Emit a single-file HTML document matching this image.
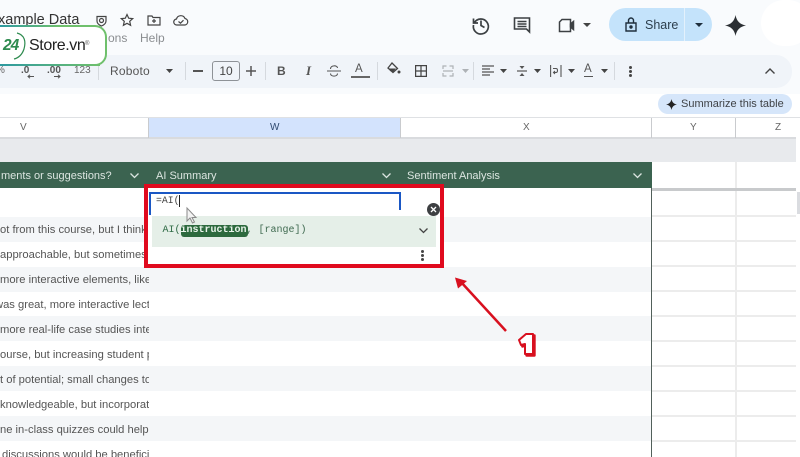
<!DOCTYPE html>
<html><head><meta charset="utf-8">
<style>
html,body{margin:0;padding:0}
body{width:800px;height:457px;overflow:hidden;position:relative;background:#fff;font-family:"Liberation Sans",sans-serif;color:#444746}
#w{position:absolute;left:0;top:0;width:800px;height:457px;overflow:hidden;background:#fff;filter:blur(.35px)}
.a{position:absolute}
.t{position:absolute;white-space:nowrap;line-height:1}
.row{position:absolute;left:0;width:651px;height:25px}
.s{background:#f4f6f8}
.cell{position:absolute;left:0;width:149px;height:25px;overflow:hidden;font-size:11.2px;color:#555}
.cell span{position:absolute;left:0;top:7px;white-space:nowrap}
.hl{position:absolute;height:2px;left:652px;width:144px;background:#ececec}
svg{position:absolute;overflow:visible}
</style></head><body><div id="w">
<div class="a" style="left:0;top:0;width:800px;height:118px;background:#f9fbfd"></div>
<div class="a" style="left:0;top:94px;width:800px;height:24px;background:#fff"></div>
<div class="a" style="left:-20px;top:55px;width:812px;height:33px;background:#f0f4f9;border-radius:16px"></div>

<div class="t" style="left:-2px;top:13px;font-size:14.5px;color:#333">xample Data</div>
<svg style="left:95px;top:14px" width="13" height="13" viewBox="0 0 13 13" fill="none" stroke="#444" stroke-width="1.2"><path d="M2 2.500h9v4.500c0 2.500-2 4-4.500 5C4 11 2 9.500 2 7z"/><circle cx="6.500" cy="6.500" r="2"/></svg>
<svg style="left:120px;top:13px" width="14" height="14" viewBox="0 0 14 14" fill="none" stroke="#444" stroke-width="1.200"><path d="M7 1.500l1.700 3.700 4 .4-3 2.700.9 4L7 10.300l-3.600 2 .9-4-3-2.700 4-.4z"/></svg>
<svg style="left:147px;top:14px" width="14" height="12" viewBox="0 0 14 12" fill="none" stroke="#444" stroke-width="1.200"><path d="M1 2h4l1 1.500h7V11H1zM7 5v4M5 7h4"/></svg>
<svg style="left:173px;top:15px" width="16" height="11" viewBox="0 0 16 11" fill="none" stroke="#444" stroke-width="1.200"><path d="M4 10a3 3 0 0 1-.5-6A4.500 4.500 0 0 1 12 3.500 3.300 3.300 0 0 1 12 10zM5.500 6.500l2 1.700 3-3"/></svg>
<div class="t" style="left:108px;top:32px;font-size:12px;color:#8a8d90">ons</div>
<div class="t" style="left:140px;top:32px;font-size:12px;color:#8a8d90">Help</div>

<!-- Right header -->
<svg style="left:471px;top:15px" width="20" height="20" viewBox="0 0 20 20" fill="none" stroke="#3c4043" stroke-width="1.700"><path d="M3.500 7.500A7.500 7.500 0 1 1 2.500 10M2.500 3.500v4.500h4.500M10 5.500V10.500l3.500 2"/></svg>
<svg style="left:513px;top:16px" width="18" height="18" viewBox="0 0 18 18" fill="none" stroke="#3c4043" stroke-width="1.600"><path d="M1.500 2h15v14l-3-3h-12zM4.500 5.500h9M4.500 8h9M4.500 10.500h9"/></svg>
<svg style="left:558px;top:18px" width="18" height="15" viewBox="0 0 18 15" fill="none" stroke="#3c4043" stroke-width="1.500"><path d="M4 1.500h8.500v12H1.500V4z"/><path d="M12.500 6l3-2.500v8l-3-2.500z" fill="#3c4043"/></svg>
<svg style="left:583px;top:23px" width="8" height="4" viewBox="0 0 8 4"><path d="M0 0h8L4 4z" fill="#444"/></svg>
<div class="a" style="left:609px;top:8px;width:103px;height:33px;background:#c4e3fb;border-radius:17px"></div>
<div class="a" style="left:684px;top:8px;width:1px;height:33px;background:#e3f1fc"></div>
<svg style="left:625px;top:17px" width="12" height="15" viewBox="0 0 12 15" fill="none" stroke="#1f2f3d" stroke-width="1.400"><path d="M1 6h10v8H1zM3.500 6V3.500a2.500 2.500 0 0 1 5 0V6"/><circle cx="6" cy="10" r="1" fill="#1f2f3d"/></svg>
<div class="t" style="left:645px;top:19px;font-size:12.500px;color:#2c3e4c">Share</div>
<svg style="left:695px;top:23px" width="8" height="4" viewBox="0 0 8 4"><path d="M0 0h8L4 4z" fill="#1f2f3d"/></svg>
<svg style="left:725px;top:15px" width="21" height="21" viewBox="0 0 21 21"><path d="M10.500 0C11.500 6 15 9.500 21 10.500 15 11.500 11.500 15 10.500 21 9.500 15 6 11.500 0 10.500 6 9.500 9.500 6 10.500 0z" fill="#2b2f33"/></svg>
<div class="a" style="left:761px;top:0;width:50px;height:46px;background:#fff;border-radius:24px"></div>

<!-- Toolbar -->
<div class="t" style="left:-4px;top:66px;font-size:10px;color:#666">%</div>
<div class="t" style="left:21px;top:66px;font-size:10px;font-weight:bold;color:#555">.0</div>
<div class="t" style="left:47px;top:66px;font-size:10px;font-weight:bold;color:#555">.00</div>
<svg style="left:27px;top:74px" width="40" height="5" viewBox="0 0 40 5" fill="none" stroke="#555" stroke-width="1"><path d="M7 2.500H1M3 .8 1 2.500 3 4.200M27 2.500h6M31 .8l2 1.700-2 1.700"/></svg>
<div class="t" style="left:74px;top:66px;font-size:10px;color:#666">123</div>
<div class="a" style="left:98px;top:62px;width:1px;height:18px;background:#d5d9de"></div>
<div class="t" style="left:110px;top:65px;font-size:12px;color:#555;letter-spacing:.2px">Roboto</div>
<svg style="left:166px;top:69px" width="7" height="4" viewBox="0 0 7 4"><path d="M0 0h7L3.500 4z" fill="#444"/></svg>
<div class="a" style="left:185px;top:62px;width:1px;height:18px;background:#d5d9de"></div>
<div class="a" style="left:193px;top:70px;width:10px;height:2px;background:#555"></div>
<div class="a" style="left:212px;top:61px;width:26px;height:18px;border:1px solid #8e9297;border-radius:3px;font-size:12px;line-height:18px;text-align:center;color:#444">10</div>
<svg style="left:246px;top:66px" width="10" height="10" viewBox="0 0 10 10" stroke="#555" stroke-width="1.500"><path d="M5 0v10M0 5h10"/></svg>
<div class="a" style="left:265px;top:62px;width:1px;height:18px;background:#d5d9de"></div>
<div class="t" style="left:277px;top:65px;font-size:12px;font-weight:bold;color:#555">B</div>
<div class="t" style="left:306px;top:64px;font-size:13px;font-weight:bold;font-style:italic;font-family:'Liberation Serif',serif;color:#555">I</div>
<svg style="left:327px;top:65px" width="14" height="12" viewBox="0 0 14 12" fill="none" stroke="#555" stroke-width="1.100"><path d="M0 6h14M3.500 4c0-4 7-4 7-1M3.500 8.500c0 3.500 7 3.500 7 0"/></svg>
<div class="t" style="left:355px;top:64px;font-size:11.500px;color:#555">A</div>
<div class="a" style="left:351px;top:76px;width:19px;height:2px;background:#666"></div>
<div class="a" style="left:377px;top:62px;width:1px;height:18px;background:#d5d9de"></div>
<svg style="left:387px;top:62px" width="14" height="13" viewBox="0 0 14 13"><path d="M5 1l5.500 5.500L6 10.500 1 6z" fill="none" stroke="#444" stroke-width="1.300"/><path d="M2 6.500h7L6 10 3 9z" fill="#444"/><circle cx="12" cy="10" r="1.500" fill="#444"/></svg>
<svg style="left:415px;top:65px" width="12" height="12" viewBox="0 0 12 12" fill="none" stroke="#444" stroke-width="1.200"><path d="M.6.600h10.800v10.800H.6zM6 .6v10.800M.6 6h10.800"/></svg>
<svg style="left:442px;top:65px" width="12" height="12" viewBox="0 0 12 12" fill="none" stroke="#aeb2b6" stroke-width="1.200"><path d="M4.500 1H1v3M4.500 11H1V8M7.500 1H11v3M7.500 11H11V8M1 6h10"/></svg>
<svg style="left:462px;top:69px" width="7" height="4" viewBox="0 0 7 4"><path d="M0 0h7L3.500 4z" fill="#aeb2b6"/></svg>
<div class="a" style="left:473px;top:62px;width:1px;height:18px;background:#d5d9de"></div>
<svg style="left:482px;top:65px" width="13" height="12" viewBox="0 0 13 12" stroke="#555" stroke-width="1.200"><path d="M0 1h12M0 4h8M0 7h12M0 10h8"/></svg>
<svg style="left:500px;top:69px" width="7" height="4" viewBox="0 0 7 4"><path d="M0 0h7L3.500 4z" fill="#444"/></svg>
<svg style="left:517px;top:64px" width="10" height="14" viewBox="0 0 10 14"><path d="M0 7h10" stroke="#555" stroke-width="1.200"/><path d="M5 5 2.500 2h5zM5 9l2.500 3h-5z" fill="#555"/></svg>
<svg style="left:534px;top:69px" width="7" height="4" viewBox="0 0 7 4"><path d="M0 0h7L3.500 4z" fill="#444"/></svg>
<svg style="left:550px;top:65px" width="12" height="12" viewBox="0 0 12 12" fill="none" stroke="#555" stroke-width="1.100"><path d="M.6 0v12M11 0v12M3 3.500h3c2 0 2 4 0 4H3.500M5 6 3.500 7.500 5 9"/></svg>
<svg style="left:568px;top:69px" width="7" height="4" viewBox="0 0 7 4"><path d="M0 0h7L3.500 4z" fill="#444"/></svg>
<div class="t" style="left:584px;top:64px;font-size:11.500px;color:#555">A</div>
<svg style="left:584px;top:75px" width="10" height="3" viewBox="0 0 10 3" stroke="#555"><path d="M0 1.500h9"/></svg>
<svg style="left:601px;top:69px" width="7" height="4" viewBox="0 0 7 4"><path d="M0 0h7L3.500 4z" fill="#444"/></svg>
<div class="a" style="left:614px;top:62px;width:1px;height:18px;background:#d5d9de"></div>
<div class="a" style="left:629px;top:66px;width:3px;height:3px;border-radius:2px;background:#444;box-shadow:0 4px 0 #444,0 8px 0 #444"></div>
<svg style="left:765px;top:68px" width="10" height="6" viewBox="0 0 10 6" fill="none" stroke="#444" stroke-width="1.400"><path d="M.5 5.500 5 1l4.500 4.500"/></svg>

<!-- Summarize pill -->
<div class="a" style="left:658px;top:94px;width:134px;height:20px;background:#d6e6fa;border-radius:10px"></div>
<svg style="left:666px;top:99px" width="11" height="11" viewBox="0 0 21 21"><path d="M10.500 0C11.500 6 15 9.500 21 10.500 15 11.500 11.500 15 10.500 21 9.500 15 6 11.500 0 10.500 6 9.500 9.500 6 10.500 0z" fill="#222"/></svg>
<div class="t" style="left:681px;top:99px;font-size:11px;color:#3f4246">Summarize this table</div>

<!-- Column headers -->
<div class="a" style="left:0;top:117px;width:800px;height:1px;background:#dfe1e4"></div>
<div class="a" style="left:149px;top:118px;width:251px;height:20px;background:#d3e3fd"></div>
<div class="a" style="left:0;top:137px;width:800px;height:2px;background:#d9dbde"></div>
<div class="a" style="left:148px;top:118px;width:1px;height:20px;background:#c9cbce"></div>
<div class="a" style="left:400px;top:118px;width:1px;height:20px;background:#c9cbce"></div>
<div class="a" style="left:651px;top:118px;width:1px;height:20px;background:#c9cbce"></div>
<div class="a" style="left:735px;top:118px;width:1px;height:20px;background:#c9cbce"></div>
<div class="t" style="left:20px;top:123px;font-size:10px;color:#666">V</div>
<div class="t" style="left:270px;top:123px;font-size:10px;color:#2f4a70">W</div>
<div class="t" style="left:523px;top:123px;font-size:10px;color:#666">X</div>
<div class="t" style="left:690px;top:123px;font-size:10px;color:#666">Y</div>
<div class="t" style="left:775px;top:123px;font-size:10px;color:#666">Z</div>

<!-- gray band -->
<div class="a" style="left:0;top:139px;width:796px;height:23px;background:#e8eaed"></div>

<!-- rows -->
<div class="row s" style="top:217px"></div>
<div class="row s" style="top:267px"></div>
<div class="row s" style="top:316px"></div>
<div class="row s" style="top:366px"></div>
<div class="row s" style="top:416px"></div>
<div class="hl" style="top:215px"></div><div class="hl" style="top:240px"></div><div class="hl" style="top:265px"></div><div class="hl" style="top:290px"></div><div class="hl" style="top:315px"></div><div class="hl" style="top:340px"></div><div class="hl" style="top:365px"></div><div class="hl" style="top:390px"></div><div class="hl" style="top:415px"></div><div class="hl" style="top:440px"></div>
<div class="a" style="left:735px;top:162px;width:2px;height:295px;background:#ececec"></div>
<div class="a" style="left:796px;top:118px;width:4px;height:339px;background:#fff"></div>
<div class="a" style="left:797px;top:192px;width:3px;height:22px;background:#dadce0"></div>
<div class="a" style="left:652px;top:188px;width:144px;height:3px;background:#c8cacc"></div>
<div class="a" style="left:651px;top:162px;width:1px;height:295px;background:#51605a"></div>

<div class="cell" style="top:217px"><span>ot from this course, but I think</span></div>
<div class="cell" style="top:242px"><span>approachable, but sometimes</span></div>
<div class="cell" style="top:267px"><span>more interactive elements, like</span></div>
<div class="cell" style="top:292px"><span style="left:-5px">was great, more interactive lectures</span></div>
<div class="cell" style="top:317px"><span>more real-life case studies integrated</span></div>
<div class="cell" style="top:342px"><span>ourse, but increasing student participation</span></div>
<div class="cell" style="top:367px"><span>t of potential; small changes to the</span></div>
<div class="cell" style="top:392px"><span>knowledgeable, but incorporating</span></div>
<div class="cell" style="top:417px"><span>ne in-class quizzes could help in</span></div>
<div class="cell" style="top:442px"><span style="left:2px">discussions would be beneficial</span></div>

<!-- Table header -->
<div class="a" style="left:0;top:162px;width:652px;height:26px;background:#3b6350"></div>
<div class="t" style="left:1px;top:170.500px;font-size:11px;color:#dbe5e0">ments or suggestions?</div>
<div class="t" style="left:156px;top:170.500px;font-size:11px;color:#dbe5e0">AI Summary</div>
<div class="t" style="left:407px;top:170.500px;font-size:11px;color:#dbe5e0">Sentiment Analysis</div>
<svg style="left:130px;top:173px" width="9" height="6" viewBox="0 0 9 6" fill="none" stroke="#dbe5e0" stroke-width="1.300"><path d="M.5.500 4.500 4.500 8.500.5"/></svg>
<svg style="left:382px;top:173px" width="9" height="6" viewBox="0 0 9 6" fill="none" stroke="#dbe5e0" stroke-width="1.300"><path d="M.5.500 4.500 4.500 8.500.5"/></svg>
<svg style="left:633px;top:173px" width="9" height="6" viewBox="0 0 9 6" fill="none" stroke="#dbe5e0" stroke-width="1.300"><path d="M.5.500 4.500 4.500 8.500.5"/></svg>

<!-- Formula popup -->
<div class="a" style="left:148px;top:188px;width:292px;height:76px;background:#fff"></div>
<div class="a" style="left:149px;top:192px;width:248px;height:16px;border:2px solid #1a57c4;border-bottom:none"></div>
<div class="a" style="left:149px;top:208px;width:2px;height:7px;background:#1a57c4"></div>
<div class="t" style="left:156px;top:196px;font-family:'Liberation Mono',monospace;font-size:9.800px;color:#444">=AI(</div>
<div class="a" style="left:179px;top:195px;width:1px;height:12px;background:#222"></div>
<div class="a" style="left:152px;top:216px;width:284px;height:31px;background:#e5efe8"></div>
<div class="a" style="left:180.500px;top:225px;width:67px;height:12px;background:#2d6a3e;border-radius:3px"></div>
<div class="t" style="left:162.500px;top:226px;font-family:'Liberation Mono',monospace;font-size:10px;color:#2f6b45">AI(<span style="color:#eaf5ec;font-weight:bold">instruction</span><span style="color:#3f6a50">, [range])</span></div>
<svg style="left:186px;top:207px" width="12" height="17" viewBox="0 0 12 17"><path d="M1 1v13l3-3 2.500 5 2-1-2.500-4.500H10z" fill="#f3f3f3" stroke="#8a8a8a" stroke-width="1"/></svg>
<svg style="left:419px;top:228px" width="9" height="6" viewBox="0 0 9 6" fill="none" stroke="#444" stroke-width="1.300"><path d="M.5.500 4.500 4.500 8.500.5"/></svg>
<div class="a" style="left:421px;top:250px;width:3px;height:3px;border-radius:2px;background:#444;box-shadow:0 4px 0 #444,0 8px 0 #444"></div>
<div class="a" style="left:144px;top:184px;width:292px;height:76px;border:4px solid #e00a1e"></div>
<div class="a" style="left:427px;top:203px;width:13px;height:13px;border-radius:7px;background:#3d3f42"></div>
<svg style="left:430px;top:206px" width="7" height="7" viewBox="0 0 7 7" stroke="#fff" stroke-width="1.300"><path d="M1 1l5 5M6 1 1 6"/></svg>

<!-- Arrow -->
<svg style="left:440px;top:260px" width="120" height="110" viewBox="0 0 120 110"><path d="M66 71 21 22" stroke="#d8101f" stroke-width="2.500" fill="none"/><path d="M15 17.500l12 3.500-9 7.500z" fill="#d8101f"/><path d="M79 80l7-6h7v20h-8V84l-4 1z" fill="#d8101f" stroke="#d8101f" stroke-width="2.400" stroke-linejoin="round" transform="translate(1.500 1.500)"/><path d="M79 80l7-6h7v20h-8V84l-4 1z" fill="#fff" stroke="#d8101f" stroke-width="2" stroke-linejoin="round"/></svg>

<!-- Logo -->
<div class="a" style="left:-10px;top:25px;width:115px;height:37px;background:#fff;border:2px solid #6fc06c;border-left:none;border-radius:0 12px 12px 0"></div>
<div class="a" style="left:0;top:64px;width:100px;height:2px;background:linear-gradient(90deg,#2e9aa0,#6fc06c)"></div>
<div class="a" style="left:0;top:25px;width:60px;height:2px;background:linear-gradient(90deg,#2e9aa0,#6fc06c)"></div>
<div class="t" style="left:3px;top:38px;font-size:15.500px;font-weight:bold;font-style:italic;color:#2e8b4f;letter-spacing:-1px">24</div>
<svg style="left:8px;top:32px" width="18" height="28" viewBox="0 0 18 28" fill="none" stroke="#2e8b4f" stroke-width="1.200"><path d="M9 1C17 3 18 10 16 17 14 23 10 26 6 27"/></svg>
<div class="t" style="left:29px;top:38px;font-size:16px;color:#222;letter-spacing:-.4px">Store.vn</div>
<div class="t" style="left:85px;top:41px;font-size:6px;color:#555">®</div>
</div></body></html>
